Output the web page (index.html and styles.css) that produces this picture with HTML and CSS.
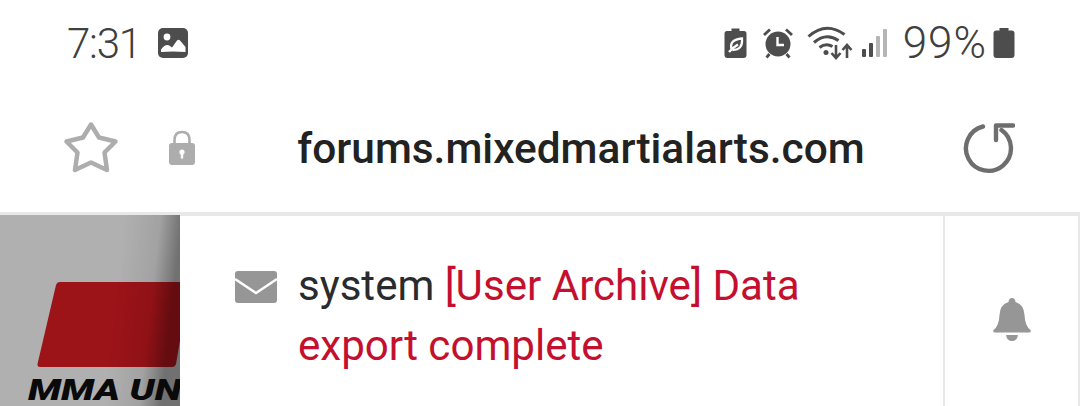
FILE: index.html
```html
<!DOCTYPE html>
<html lang="en">
<head>
    <meta charset="UTF-8">
    <meta name="viewport" content="width=device-width, initial-scale=1.0">
    <title>forums.mixedmartialarts.com</title>
    <link rel="stylesheet" href="styles.css">
</head>
<body>
    <div class="status-bar">
        <div class="status-left">
            <span class="clock">7:31</span>
            <svg class="icon-picture" width="32" height="32" viewBox="0 0 32 32">
                <rect x="1" y="1" width="30" height="30" rx="5" fill="#4d4d4d"/>
                <circle cx="10" cy="10" r="3.4" fill="#fff"/>
                <path d="M4 25 L4 22.5 Q9 16 13 19 L15 20.5 L20 13.5 Q21.5 12 23 13.5 L28.5 20 L28.5 25 Q16 24 4 25 Z" fill="#fff"/>
            </svg>
        </div>
        <div class="status-right">
            <svg class="icon-eco" width="23" height="32" viewBox="0 0 23 32">
                <path d="M7.5 1.5 H15.5 V4 H20 Q22.5 4 22.5 6.5 V28 Q22.5 31 19.5 31 H3.5 Q.5 31 .5 28 V6.5 Q.5 4 3 4 H7.5 Z" fill="#4d4d4d"/>
                <path d="M5 25 Q9 20.5 14 17.5 M7.5 22 Q5 12.5 18 11.5 Q19 23 8.5 23" fill="none" stroke="#fff" stroke-width="2.3"/>
            </svg>
            <svg class="icon-alarm" width="32" height="32" viewBox="0 0 32 32">
                <circle cx="16" cy="17" r="12.5" fill="#4d4d4d"/>
                <path d="M2 8 L8 2.5 M30 8 L24 2.5 M7.5 27 L4.5 30.5 M24.5 27 L27.5 30.5" stroke="#4d4d4d" stroke-width="2.8" fill="none"/>
                <path d="M15.5 10 V18 H22" stroke="#fff" stroke-width="2.4" fill="none"/>
            </svg>
            <svg class="icon-wifi" width="46" height="34" viewBox="0 0 46 34">
                <path d="M1.5 10.5 Q19 -5 37.5 8.5 M7 16.5 Q19 6 31.5 14.5 M12.5 21.5 Q19 16.5 25.5 20.5" fill="none" stroke="#4d4d4d" stroke-width="3"/>
                <circle cx="19" cy="26.5" r="2.5" fill="#4d4d4d"/>
                <path d="M29 19 V32 M24.5 27 L29 32 L33.5 27 M40 32 V19 M35.5 24 L40 19 L44.5 24" fill="none" stroke="#4d4d4d" stroke-width="2.6"/>
            </svg>
            <svg class="icon-signal" width="28" height="30" viewBox="0 0 28 30">
                <rect x="1" y="21" width="4" height="8" rx="1" fill="#4d4d4d"/>
                <rect x="8" y="15" width="4" height="14" rx="1" fill="#4d4d4d"/>
                <rect x="15" y="8" width="4" height="21" rx="1" fill="#b5b5b5"/>
                <rect x="22" y="1" width="4" height="28" rx="1" fill="#b5b5b5"/>
            </svg>
            <span class="battery-text">99%</span>
            <svg class="icon-battery" width="22" height="32" viewBox="0 0 22 32">
                <path d="M6.5 1 H15.5 V3.5 H18.5 Q21.5 3.5 21.5 6.5 V28 Q21.5 31 18.5 31 H3.5 Q.5 31 .5 28 V6.5 Q.5 3.5 3.5 3.5 H6.5 Z" fill="#4d4d4d"/>
            </svg>
        </div>
    </div>

    <div class="url-bar">
        <svg class="icon-star" width="58" height="54" viewBox="0 0 58 54">
            <path d="M29 3.5 L37 16.5 L53.5 20.5 L42.5 31.5 L45 49 L29 41.5 L13 49 L15.5 31.5 L4.5 20.5 L21 16.5 Z" fill="none" stroke="#adadad" stroke-width="4.5" stroke-linejoin="round"/>
        </svg>
        <svg class="icon-lock" width="28" height="36" viewBox="0 0 28 36">
            <path d="M6.5 16 V10 Q6.5 2 14 2 Q21.5 2 21.5 10 V16" fill="none" stroke="#adadad" stroke-width="2.6"/>
            <rect x="1" y="13" width="26" height="22" rx="3" fill="#adadad"/>
            <circle cx="14" cy="22" r="2.6" fill="#fff"/>
            <rect x="12.8" y="22" width="2.4" height="6.5" fill="#fff"/>
        </svg>
        <div class="url">forums.mixedmartialarts.com</div>
        <svg class="icon-reload" width="52" height="52" viewBox="0 0 52 52">
            <path d="M20 4.5 A22.5 22.5 0 1 0 38.5 8" fill="none" stroke="#6e6e6e" stroke-width="4.4" stroke-linecap="round"/>
            <path d="M50 3.5 H33 V18" fill="none" stroke="#6e6e6e" stroke-width="4.4" stroke-linejoin="round" stroke-linecap="round"/>
        </svg>
    </div>

    <div class="page">
        <div class="logo-panel">
            <svg class="logo" width="180" height="191" viewBox="0 0 180 191">
                <defs>
                    <linearGradient id="logoShade" x1="0" x2="1" y1="0" y2="0.12">
                        <stop offset="0.68" stop-color="#000" stop-opacity="0"/>
                        <stop offset="0.88" stop-color="#000" stop-opacity="0.08"/>
                        <stop offset="1" stop-color="#000" stop-opacity="0.36"/>
                    </linearGradient>
                </defs>
                <rect width="180" height="191" fill="#b0b0b0"/>
                <path d="M60 67 H190 L176 149 Q175 152 172 152 H40 Q37 152 37.5 149 L56 70 Q57 67 60 67 Z" fill="#9c1318"/>
                <rect width="180" height="191" fill="url(#logoShade)"/>
                <text class="logo-text" transform="translate(28 185) scale(1.34 1)">MMA UN</text>
            </svg>
        </div>
        <div class="message">
            <svg class="icon-mail" width="43" height="32" viewBox="0 0 43 32">
                <rect width="42" height="32" rx="3" fill="#969696"/>
                <path d="M0 8 L21 22 L42 8" fill="none" stroke="#fff" stroke-width="2.4"/>
            </svg>
            <p class="message-text">system <span class="message-title">[User Archive] Data export complete</span></p>
        </div>
        <div class="bell-panel">
            <svg class="icon-bell" width="38" height="44" viewBox="0 0 38 44">
                <path d="M19 0 Q22 0 22.5 4 Q31 6.5 31.5 17 Q32 28 37.5 32 Q38.5 34.5 36 34.5 H2 Q-.5 34.5 .5 32 Q6 28 6.5 17 Q7 6.5 15.5 4 Q16 0 19 0 Z" fill="#969696"/>
                <path d="M13 37 H25 Q24 43 19 43 Q14 43 13 37 Z" fill="#969696"/>
            </svg>
        </div>
    </div>
</body>
</html>
```

FILE: styles.css
```css
* {
    margin: 0;
    padding: 0;
    box-sizing: border-box;
}

html, body {
    width: 1080px;
    height: 406px;
    overflow: hidden;
    background: #fff;
    font-family: Roboto, "Liberation Sans", sans-serif;
}

svg {
    display: block;
    flex-shrink: 0;
}

.status-bar {
    height: 88px;
    display: flex;
    align-items: center;
    justify-content: space-between;
    padding: 0 65px 2px 67px;
    color: #404040;
}

.status-left,
.status-right {
    display: flex;
    align-items: center;
}

.clock {
    font-size: 42px;
    font-weight: 300;
    letter-spacing: -1.2px;
    margin-right: 16px;
}

.status-right .icon-eco {
    margin-right: 15px;
}

.status-right .icon-alarm {
    margin-right: 13px;
}

.status-right .icon-wifi {
    margin-right: 8px;
}

.status-right .icon-signal {
    margin-right: 14px;
}

.battery-text {
    font-size: 44px;
    font-weight: 300;
    letter-spacing: 1px;
    margin-right: 6px;
}

.url-bar {
    height: 124px;
    display: flex;
    align-items: center;
    padding: 0 65px 4px 62px;
}

.icon-lock {
    margin-left: 48px;
}

.url {
    flex: 1;
    text-align: center;
    font-size: 42.4px;
    font-weight: 500;
    color: #222;
    padding-left: 3px;
    white-space: nowrap;
}

.page {
    height: 194px;
    display: flex;
    border-top: 3px solid #e8e8e8;
}

.logo-panel {
    width: 180px;
    height: 191px;
    overflow: hidden;
}

.logo-text {
    font-family: Roboto, "Liberation Sans", sans-serif;
    font-size: 29px;
    font-weight: 900;
    font-style: italic;
    fill: #0a0a0a;
}

.message {
    flex: 1;
    display: flex;
    align-items: flex-start;
    padding: 40px 130px 0 55px;
    border-top: 1px solid #e8e8e8;
}

.icon-mail {
    margin: 15px 20px 0 0;
}

.message-text {
    font-size: 42.1px;
    line-height: 60px;
    color: #2b2b2b;
}

.message-title {
    color: #c4102e;
}

.bell-panel {
    width: 137px;
    display: flex;
    justify-content: center;
    padding-top: 82px;
    border-top: 1px solid #e8e8e8;
    border-left: 2px solid #e8e8e8;
    border-right: 2px solid #e8e8e8;
}
```
